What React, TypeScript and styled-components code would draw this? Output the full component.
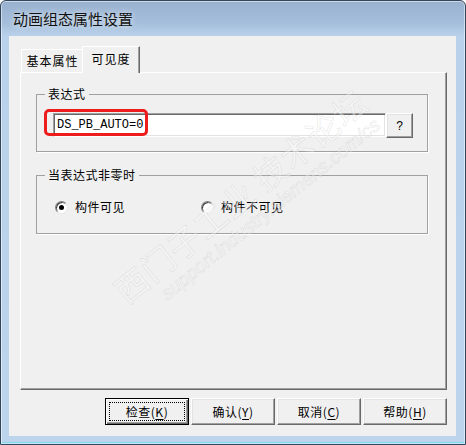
import React from 'react';
import styled, { createGlobalStyle } from 'styled-components';

const Global = createGlobalStyle`
  html, body { margin: 0; padding: 0; background: #ffffff; }
  body {
    width: 466px; height: 445px; overflow: hidden;
    font-family: "Noto Sans CJK SC", "Noto Sans", sans-serif;
    font-size: 12px; color: #000;
  }
  * { box-sizing: border-box; }
`;

const Window = styled.div`
  width: 466px;
  height: 445px;
  display: flex;
  flex-direction: column;
  border: 1px solid #33475c;
  border-radius: 6px 6px 0 0;
  background: linear-gradient(to bottom, #98b1cf 0px, #a4bedb 22px, #b9d1ea 35px, #bcd4ec 100%);
  padding: 0 9px 8px 8px;
  box-shadow: inset 0 0 0 1px rgba(255, 255, 255, 0.5), inset 0 -2px 0 #86d7ec;
`;

const TitleBar = styled.div`
  height: 35px;
  display: flex;
  align-items: flex-start;
  padding: 9px 0 0 4px;
  font-size: 15px;
  line-height: 18px;
  color: #111;
  text-shadow: 0 0 6px rgba(255, 255, 255, 0.9);
`;

const Client = styled.div`
  position: relative;
  flex: 1;
  background: #f0f0f0;
  padding: 10px 9px 0 11px;
  display: flex;
  flex-direction: column;
  overflow: hidden;
`;

const TabsRow = styled.div`
  height: 26px;
  display: flex;
  align-items: flex-end;
  padding-left: 1px;
  position: relative;
  z-index: 2;
`;

const Tab = styled.div<{ $active?: boolean }>`
  height: ${p => (p.$active ? '27px' : '23px')};
  width: ${p => (p.$active ? '58px' : '63px')};
  margin-left: ${p => (p.$active ? '-2px' : '0')};
  margin-bottom: ${p => (p.$active ? '-1px' : '0')};
  background: #f0f0f0;
  border-top: 1px solid #ffffff;
  border-left: 1px solid #ffffff;
  border-right: 1px solid #696969;
  box-shadow: inset -1px 0 0 #a0a0a0;
  display: flex;
  align-items: ${p => (p.$active ? 'flex-start' : 'center')};
  justify-content: center;
  padding-top: ${p => (p.$active ? '4px' : '0')};
  font-size: 12px;
  line-height: 16px;
  letter-spacing: 1px;
  position: relative;
  z-index: ${p => (p.$active ? 2 : 1)};
`;

const Panel = styled.div`
  height: 318px;
  border: 1px solid;
  border-color: #ffffff #696969 #696969 #ffffff;
  box-shadow: inset -1px -1px 0 #a0a0a0;
  padding: 13px 18px 0 15px;
  display: flex;
  flex-direction: column;
`;

const Group = styled.fieldset<{ $gap?: number }>`
  margin: ${p => p.$gap ?? 0}px 0 0 0;
  padding: 0;
  min-width: 0;
  border: 1px solid #a0a0a0;
  box-shadow: 1px 1px 0 #ffffff;
`;

const Legend = styled.legend`
  margin-left: 8px;
  padding: 0 3px;
  font-size: 12px;
  line-height: 16px;
  letter-spacing: 0.5px;
`;

const GroupBody = styled.div<{ $pad: string }>`
  padding: ${p => p.$pad};
`;

const InputRow = styled.div`
  position: relative;
  display: flex;
  height: 25px;
`;

const TextBox = styled.div`
  width: 333px;
  height: 24px;
  background: #ffffff;
  border: 1px solid;
  border-color: #a0a0a0 #ffffff #ffffff #a0a0a0;
  box-shadow: inset 1px 1px 0 #696969, inset -1px -1px 0 #e3e3e3;
  padding: 3px 0 0 3px;
  font-family: "Liberation Mono", monospace;
  font-size: 12px;
  line-height: 16px;
  white-space: nowrap;
`;

const Highlight = styled.div`
  position: absolute;
  left: -9px;
  top: -4px;
  width: 104px;
  height: 27px;
  border: 3px solid #ee1d1d;
  border-radius: 5px;
  pointer-events: none;
`;

const SmallButton = styled.div`
  width: 27px;
  height: 25px;
  border: 1px solid;
  border-color: #ffffff #696969 #696969 #ffffff;
  box-shadow: inset -1px -1px 0 #a0a0a0, inset 1px 1px 0 #e3e3e3;
  background: #f0f0f0;
  display: flex;
  align-items: center;
  justify-content: center;
  font-family: "Liberation Sans", sans-serif;
  font-size: 12px;
`;

const RadioGrid = styled.div`
  display: grid;
  grid-template-columns: 146px auto;
  align-items: center;
  height: 16px;
`;

const RadioItem = styled.div`
  display: flex;
  align-items: center;
  gap: 7px;
  font-size: 12px;
  line-height: 16px;
  letter-spacing: 0.5px;
`;

const RadioCircle = styled.span<{ $checked?: boolean }>`
  width: 13px;
  height: 13px;
  border-radius: 50%;
  background: #ffffff;
  border: 1px solid;
  border-color: #808080 #e8e8e8 #e8e8e8 #808080;
  box-shadow: inset 1px 1px 0 #404040;
  display: flex;
  align-items: center;
  justify-content: center;
  &::after {
    content: '';
    width: 5px;
    height: 5px;
    border-radius: 50%;
    background: ${p => (p.$checked ? '#000' : 'transparent')};
  }
`;

const ButtonRow = styled.div`
  margin-top: 8px;
  display: flex;
  justify-content: flex-end;
  gap: 2px;
`;

const Button = styled.div<{ $default?: boolean }>`
  position: relative;
  width: 84px;
  height: 27px;
  background: #f0f0f0;
  border: 1px solid;
  border-color: ${p => (p.$default ? '#000 #000 #000 #000' : '#ffffff #696969 #696969 #ffffff')};
  box-shadow: ${p =>
    p.$default
      ? 'inset 1px 1px 0 #ffffff, inset -1px -1px 0 #696969, inset -2px -2px 0 #a0a0a0'
      : 'inset -1px -1px 0 #a0a0a0, inset 1px 1px 0 #e3e3e3'};
  display: flex;
  align-items: center;
  justify-content: center;
  font-size: 12px;
  line-height: 16px;
  letter-spacing: 0.5px;
  &::before {
    content: '';
    display: ${p => (p.$default ? 'block' : 'none')};
    position: absolute;
    inset: 3px;
    border: 1px dotted #000;
  }
`;

const Key = styled.span`
  text-decoration: underline;
  text-underline-offset: 2px;
`;

const Watermark = styled.div`
  position: absolute;
  left: 238px;
  top: 168px;
  width: 0;
  height: 0;
  pointer-events: none;
  z-index: 5;
`;

const WatermarkInner = styled.div`
  position: absolute;
  transform: translate(-50%, -50%) rotate(-39deg);
  display: flex;
  flex-direction: column;
  align-items: center;
  white-space: nowrap;
`;

const WmMain = styled.div`
  font-size: 33px;
  line-height: 38px;
  letter-spacing: 1px;
  color: rgba(255, 255, 255, 0.4);
  -webkit-text-stroke: 0.6px rgba(185, 185, 185, 0.36);
`;

const WmSub = styled.div`
  font-family: "Liberation Sans", sans-serif;
  font-style: italic;
  font-size: 19px;
  line-height: 22px;
  margin-left: 30px;
  color: rgba(255, 255, 255, 0.4);
  -webkit-text-stroke: 0.6px rgba(185, 185, 185, 0.36);
`;

export default function App() {
  return (
    <>
      <Global />
      <Window>
        <TitleBar>动画组态属性设置</TitleBar>
        <Client>
          <TabsRow>
            <Tab>基本属性</Tab>
            <Tab $active>可见度</Tab>
          </TabsRow>
          <Panel>
            <Group>
              <Legend>表达式</Legend>
              <GroupBody $pad="11px 14px 13px 16px">
                <InputRow>
                  <TextBox>DS_PB_AUTO=0</TextBox>
                  <SmallButton>?</SmallButton>
                  <Highlight />
                </InputRow>
              </GroupBody>
            </Group>
            <Group $gap={15}>
              <Legend>当表达式非零时</Legend>
              <GroupBody $pad="16px 0 18px 18px">
                <RadioGrid>
                  <RadioItem>
                    <RadioCircle $checked />
                    构件可见
                  </RadioItem>
                  <RadioItem>
                    <RadioCircle />
                    构件不可见
                  </RadioItem>
                </RadioGrid>
              </GroupBody>
            </Group>
          </Panel>
          <ButtonRow>
            <Button $default>
              检查(<Key>K</Key>)
            </Button>
            <Button>
              确认(<Key>Y</Key>)
            </Button>
            <Button>
              取消(<Key>C</Key>)
            </Button>
            <Button>
              帮助(<Key>H</Key>)
            </Button>
          </ButtonRow>
          <Watermark>
            <WatermarkInner>
              <WmMain>西门子工业 技术论坛</WmMain>
              <WmSub>support.industry.siemens.com/cs</WmSub>
            </WatermarkInner>
          </Watermark>
        </Client>
      </Window>
    </>
  );
}
